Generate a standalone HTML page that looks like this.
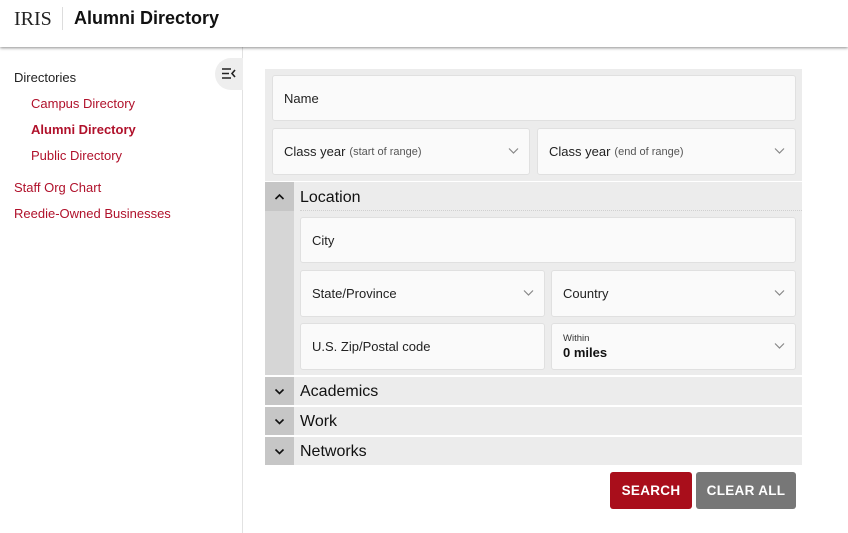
<!DOCTYPE html>
<html><head><style>
*{box-sizing:border-box;margin:0;padding:0}
body{width:848px;height:533px;background:#fff;font-family:"Liberation Sans",sans-serif;position:relative;overflow:hidden;color:#222}
.a{position:absolute}
.hdr{left:0;top:0;width:848px;height:47px;background:#fff;box-shadow:0 1px 3px rgba(0,0,0,.45);z-index:2}
.side{left:0;top:47px;width:243px;height:486px;border-right:1px solid #e2e2e2}
.lnk{color:#b0112b;font-size:13px}
.f{position:absolute;background:#fafafa;border:1px solid #e0e0e0;border-radius:3px;font-size:13px;color:#222;padding-left:11px;display:flex;align-items:center}
.f small{font-size:11px;color:#555;margin-left:4px}
.chev{position:absolute;right:10px;top:50%;margin-top:-5px}
.sec{position:absolute;left:265px;width:537px;height:28px;background:#ececec}
.sec .t{position:absolute;left:0;top:0;width:29px;height:28px;background:#c6c6c6}
.sec span{position:absolute;left:35px;top:6px;font-size:16px;color:#111}
.btn{position:absolute;top:472px;height:37px;border-radius:3px;color:#fff;font-weight:bold;font-size:13.5px;display:flex;align-items:center;justify-content:center;letter-spacing:.3px}
</style></head><body>
<div class="a hdr">
<div class="a" style="left:14px;top:8px;font-family:'Liberation Serif',serif;font-size:20px;color:#222">IRIS</div>
<div class="a" style="left:62px;top:7px;width:1px;height:23px;background:#ddd"></div>
<div class="a" style="left:74px;top:8px;font-size:18px;font-weight:bold;color:#111">Alumni Directory</div>
</div>
<div class="a side"></div>
<div class="a" style="left:215px;top:58px;width:28px;height:32px;background:#eee;border-radius:16px 0 0 16px"></div>
<svg class="a" style="left:221px;top:67px" width="16" height="13" viewBox="0 0 16 13"><path d="M1 2h9M1 6.5h7M1 11h9M14 3l-3 3.5 3 3.5" stroke="#222" stroke-width="1.6" fill="none"/></svg>
<div class="a" style="left:14px;top:70px;font-size:13px;color:#222">Directories</div>
<div class="a lnk" style="left:31px;top:96px">Campus Directory</div>
<div class="a lnk" style="left:31px;top:122px;font-weight:bold">Alumni Directory</div>
<div class="a lnk" style="left:31px;top:148px">Public Directory</div>
<div class="a lnk" style="left:14px;top:180px">Staff Org Chart</div>
<div class="a lnk" style="left:14px;top:206px">Reedie-Owned Businesses</div>

<div class="a" style="left:265px;top:69px;width:537px;height:112px;background:#ececec"></div>
<div class="f" style="left:272px;top:75px;width:524px;height:46px">Name</div>
<div class="f" style="left:272px;top:128px;width:258px;height:47px">Class year<small>(start of range)</small><svg class="chev" width="11" height="8"><path d="M1 1.5l4.5 4.5 4.5-4.5" stroke="#888" stroke-width="1.2" fill="none"/></svg></div>
<div class="f" style="left:537px;top:128px;width:259px;height:47px">Class year<small>(end of range)</small><svg class="chev" width="11" height="8"><path d="M1 1.5l4.5 4.5 4.5-4.5" stroke="#888" stroke-width="1.2" fill="none"/></svg></div>

<div class="sec" style="top:182px;height:29px"><div class="t" style="height:29px"></div><span style="top:7px">Location</span>
<svg class="a" style="left:9px;top:11px" width="11" height="7"><path d="M1.5 6l4-4 4 4" stroke="#111" stroke-width="1.6" fill="none"/></svg></div>
<div class="a" style="left:300px;top:210px;width:502px;border-top:1px dotted #d0d0d0"></div>
<div class="a" style="left:265px;top:211px;width:29px;height:164px;background:#d6d6d6"></div>
<div class="a" style="left:294px;top:211px;width:508px;height:164px;background:#ececec"></div>
<div class="f" style="left:300px;top:217px;width:496px;height:46px">City</div>
<div class="f" style="left:300px;top:270px;width:245px;height:47px">State/Province<svg class="chev" width="11" height="8"><path d="M1 1.5l4.5 4.5 4.5-4.5" stroke="#888" stroke-width="1.2" fill="none"/></svg></div>
<div class="f" style="left:551px;top:270px;width:245px;height:47px">Country<svg class="chev" width="11" height="8"><path d="M1 1.5l4.5 4.5 4.5-4.5" stroke="#888" stroke-width="1.2" fill="none"/></svg></div>
<div class="f" style="left:300px;top:323px;width:245px;height:47px">U.S. Zip/Postal code</div>
<div class="f" style="left:551px;top:323px;width:245px;height:47px;display:block;padding-top:9px"><div style="font-size:9.5px;color:#333">Within</div><div style="font-size:13px;font-weight:bold;color:#111;margin-top:1px">0 miles</div><svg class="chev" width="11" height="8"><path d="M1 1.5l4.5 4.5 4.5-4.5" stroke="#888" stroke-width="1.2" fill="none"/></svg></div>

<div class="sec" style="top:377px"><div class="t"></div><span>Academics</span><svg class="a" style="left:9px;top:11px" width="11" height="7"><path d="M1.5 1.5l4 4 4-4" stroke="#111" stroke-width="1.6" fill="none"/></svg></div>
<div class="sec" style="top:407px"><div class="t"></div><span>Work</span><svg class="a" style="left:9px;top:11px" width="11" height="7"><path d="M1.5 1.5l4 4 4-4" stroke="#111" stroke-width="1.6" fill="none"/></svg></div>
<div class="sec" style="top:437px"><div class="t"></div><span>Networks</span><svg class="a" style="left:9px;top:11px" width="11" height="7"><path d="M1.5 1.5l4 4 4-4" stroke="#111" stroke-width="1.6" fill="none"/></svg></div>

<div class="btn" style="left:610px;width:82px;background:#a90e1b">SEARCH</div>
<div class="btn" style="left:696px;width:100px;background:#777">CLEAR ALL</div>
</body></html>
